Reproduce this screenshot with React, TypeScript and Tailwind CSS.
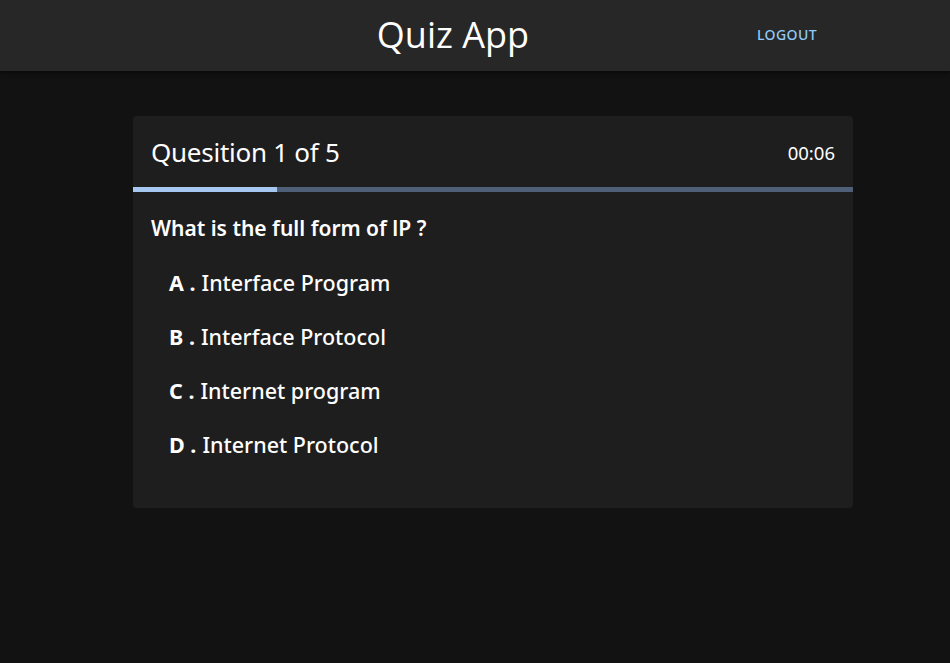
import React from 'react';

const options = [
    { key: 'A', text: 'Interface Program' },
    { key: 'B', text: 'Interface Protocol' },
    { key: 'C', text: 'Internet program' },
    { key: 'D', text: 'Internet Protocol' },
];

export default function App() {
    const progress = 20;

    return (
        <div className="min-h-screen bg-[#121212] text-white font-['Noto_Sans',sans-serif]">
            {/* App bar */}
            <header className="h-[71px] bg-[#272727] flex items-center shadow-[0_2px_4px_rgba(0,0,0,0.5)]">
                <div className="flex-1 pl-[157px] text-center">
                    <h1 className="text-[36px] leading-none font-['Open_Sans',sans-serif] font-normal text-white -mt-[2px]">Quiz App</h1>
                </div>
                <button className="mr-[125px] px-2 py-1.5 text-[14px] font-medium tracking-[0.03em] text-[#90caf9] uppercase -mt-[2px]">
                    Logout
                </button>
            </header>

            <main className="pt-[45px] pl-[133px]">
                <div className="w-[720px] bg-[#1e1e1e] rounded overflow-hidden">
                    <div className="h-[71px] flex items-center justify-between px-[18px]">
                        <h2 className="text-[26px] font-normal tracking-[-0.01em] mt-[2px]">Quesition 1 of 5</h2>
                        <span className="text-[18.5px] mt-[2px]">00:06</span>
                    </div>
                    <div className="h-[5px] bg-[#4f5f78]">
                        <div className="h-full bg-[#a6c8f0]" style={{ width: `${progress}%` }} />
                    </div>
                    <div className="px-[18px] pt-[22px] pb-[36px]">
                        <p className="text-[21px] font-semibold leading-[28px]">What is the full form of lP ?</p>
                        <ul className="mt-[14px] pl-[18px] flex flex-col">
                            {options.map(o => (
                                <li key={o.key} className="h-[54px] flex items-center text-[21.5px] font-medium">
                                    <span className="font-bold">{o.key} .</span>
                                    <span className="ml-[6px]">{o.text}</span>
                                </li>
                            ))}
                        </ul>
                    </div>
                </div>
            </main>
        </div>
    );
}
